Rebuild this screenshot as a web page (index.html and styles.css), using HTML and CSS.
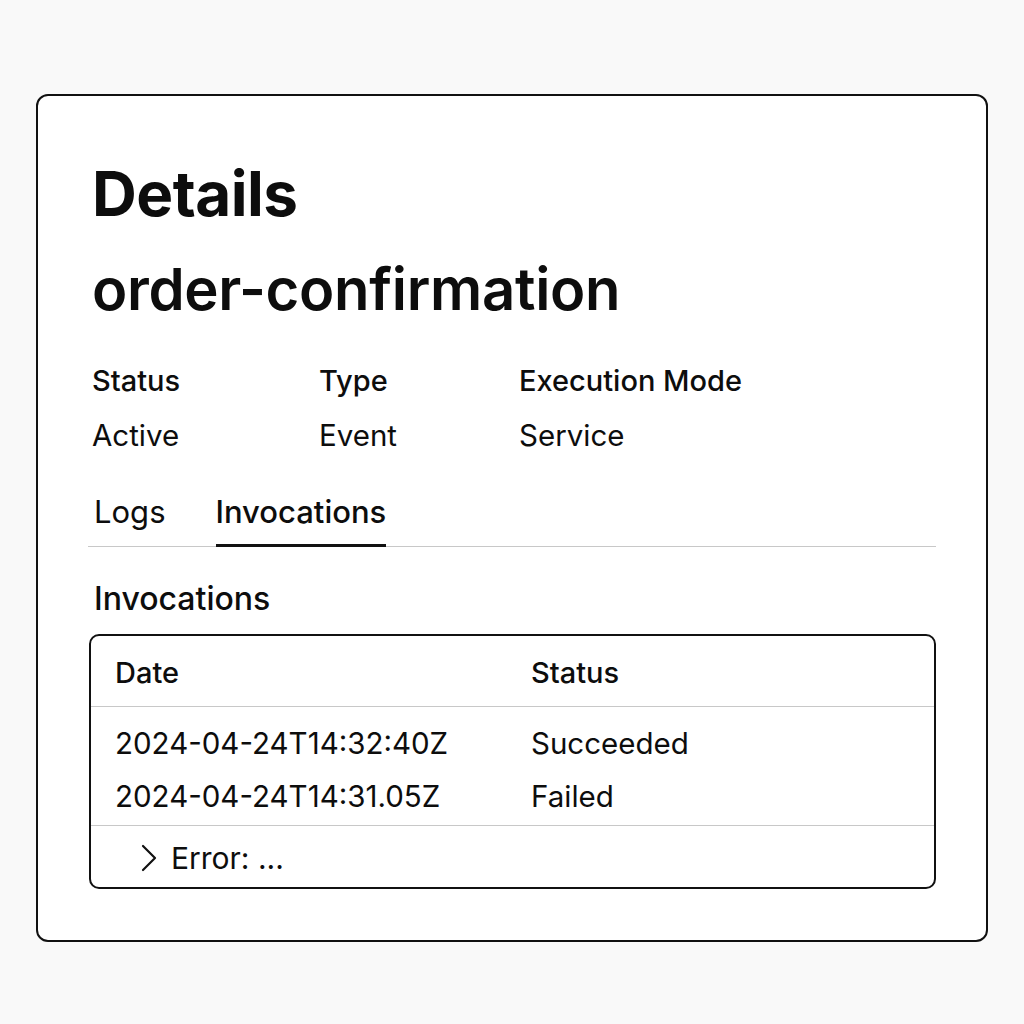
FILE: index.html
```html
<!DOCTYPE html>
<html>
<head>
<meta charset="utf-8">
<link rel="stylesheet" href="styles.css">
</head>
<body>
<div class="card">
  <h1 class="title">Details</h1>
  <h2 class="name">order-confirmation</h2>
  <div class="meta">
    <div class="meta-col c1"><div class="label">Status</div><div class="value">Active</div></div>
    <div class="meta-col c2"><div class="label">Type</div><div class="value">Event</div></div>
    <div class="meta-col c3"><div class="label">Execution Mode</div><div class="value">Service</div></div>
  </div>
  <div class="tabs">
    <div class="tab">Logs</div>
    <div class="tab active">Invocations</div>
  </div>
  <h3 class="section">Invocations</h3>
  <div class="table">
    <div class="row head"><div class="cell date">Date</div><div class="cell">Status</div></div>
    <div class="body">
      <div class="row"><div class="cell date">2024-04-24T14:32:40Z</div><div class="cell">Succeeded</div></div>
      <div class="row"><div class="cell date">2024-04-24T14:31.05Z</div><div class="cell">Failed</div></div>
    </div>
    <div class="error">
      <svg class="chev" width="18" height="28" viewBox="0 0 18 28"><path d="M4 2 L16 14 L4 26" fill="none" stroke="#111" stroke-width="2.2" stroke-linecap="round" stroke-linejoin="round"/></svg>
      <span>Error: ...</span>
    </div>
  </div>
</div>
</body>
</html>
```

FILE: styles.css
```css
html, body { margin: 0; padding: 0; }
body {
  background: #f9f9f9;
  font-family: Inter, "Noto Sans", sans-serif;
  color: #0d0d0d;
  width: 1024px;
  height: 1024px;
  padding-top: 94px;
  box-sizing: border-box;
}
.card {
  margin-left: 36px;
  width: 952px;
  height: 848px;
  box-sizing: border-box;
  border: 2px solid #111;
  border-radius: 12px;
  background: #fff;
  padding: 66px 50px 0 54px;
}
.title {
  margin: 0;
  font-size: 62px;
  line-height: 64px;
  font-weight: 700;
  letter-spacing: -0.5px;
}
.name {
  margin: 33px 0 0 0;
  font-size: 58px;
  line-height: 60px;
  font-weight: 600;
  letter-spacing: -0.3px;
}
.meta {
  display: flex;
  margin-top: 46px;
}
.c1 { width: 227px; }
.c2 { width: 200px; }
.label { font-size: 29px; line-height: 32px; font-weight: 500; }
.value { font-size: 29.5px; line-height: 32px; font-weight: 400; margin-top: 22px; }
.tabs {
  display: flex;
  margin-top: 44px;
  margin-left: -4px;
  border-bottom: 1.5px solid #c8c8c8;
}
.tab {
  font-size: 31px;
  line-height: 34px;
  padding: 0 0 15px 6px;
  margin-right: 50px;
  font-weight: 400;
}
.tab.active {
  font-weight: 500;
  border-bottom: 3px solid #111;
  margin-bottom: -1.5px;
  padding-left: 0;
}
.section {
  margin: 35px 0 0 2px;
  font-size: 32px;
  line-height: 34px;
  font-weight: 500;
}
.table {
  margin-top: 18px;
  margin-left: -3px;
  border: 2px solid #111;
  border-radius: 10px;
  height: 255px;
  box-sizing: border-box;
}
.row { display: flex; font-size: 29px; line-height: 32px; }
.body .row { font-size: 29.5px; }
.cell.date { width: 416px; }
.head { padding: 21px 0 17px 24px; font-weight: 500; border-bottom: 1.5px solid #c8c8c8; }
.body { padding: 20px 0 13px 24px; border-bottom: 1.5px solid #c8c8c8; }
.body .row + .row { margin-top: 21px; }
.error {
  display: flex;
  align-items: center;
  gap: 14px;
  padding: 16px 0 0 48px;
  font-size: 30px;
  line-height: 32px;
}
```
